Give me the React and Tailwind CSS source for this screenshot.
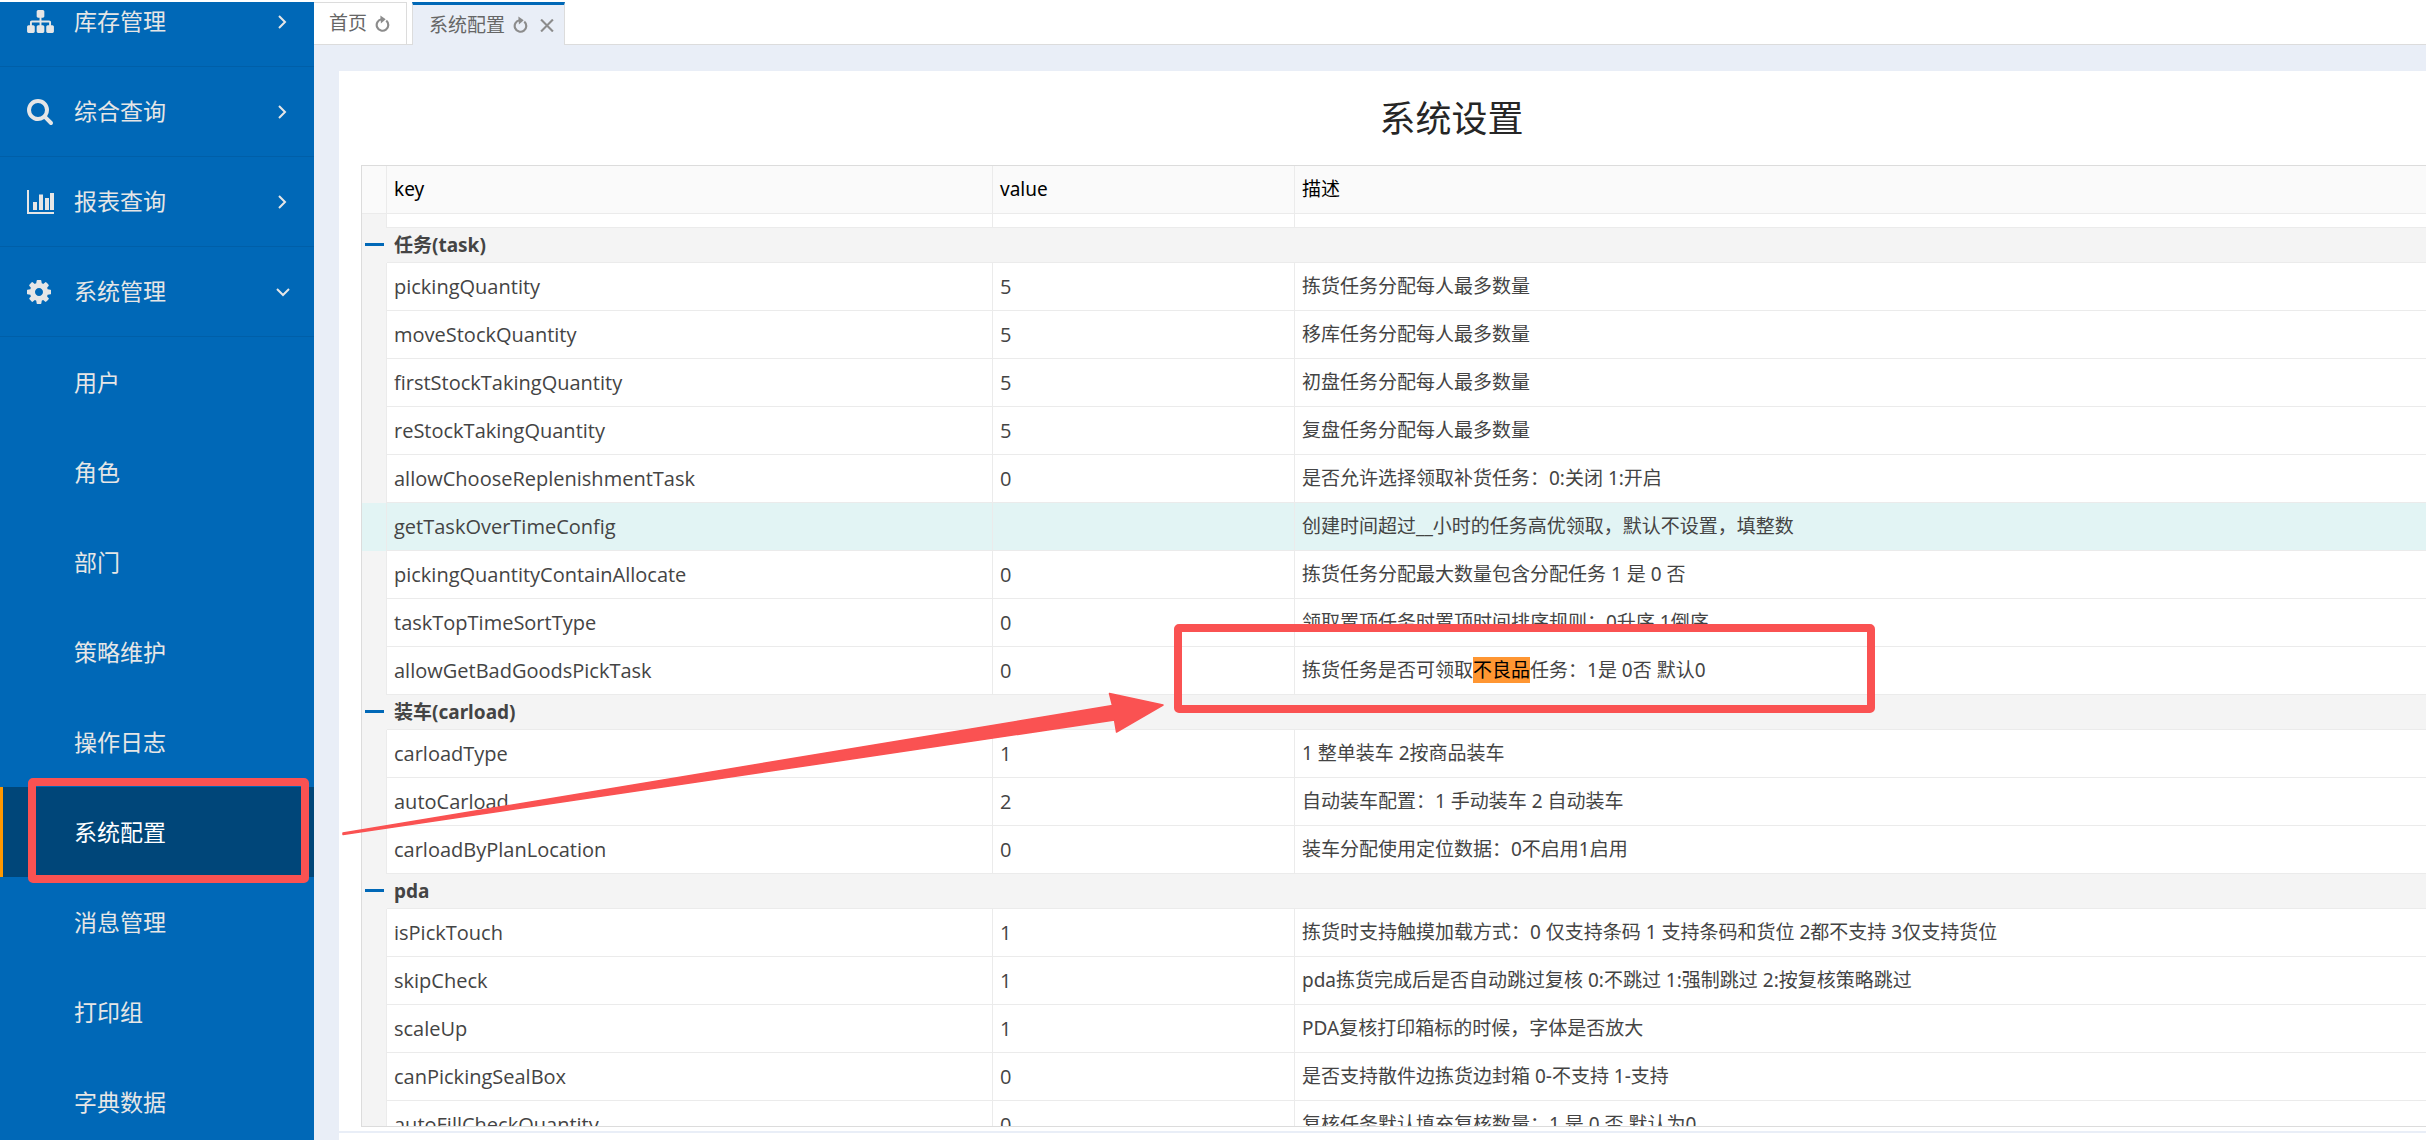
import React from "react";
import clsx from "clsx";

const SitemapIcon = () => (
  <svg width="27" height="23" viewBox="0 128 1792 1536" fill="currentColor">
    <path d="M1792 1248v320q0 40-28 68t-68 28h-320q-40 0-68-28t-28-68v-320q0-40 28-68t68-28h96v-192h-512v192h96q40 0 68 28t28 68v320q0 40-28 68t-68 28h-320q-40 0-68-28t-28-68v-320q0-40 28-68t68-28h96v-192h-512v192h96q40 0 68 28t28 68v320q0 40-28 68t-68 28h-320q-40 0-68-28t-28-68v-320q0-40 28-68t68-28h96v-192q0-52 38-90t90-38h512v-192h-96q-40 0-68-28t-28-68v-320q0-40 28-68t68-28h320q40 0 68 28t28 68v320q0 40-28 68t-68 28h-96v192h512q52 0 90 38t38 90v192h96q40 0 68 28t28 68z" />
  </svg>
);

const SearchIcon = () => (
  <svg width="26" height="26" viewBox="64 128 1664 1664" fill="currentColor">
    <path d="M1216 832q0-185-131.5-316.5t-316.5-131.5-316.5 131.5-131.5 316.5 131.5 316.5 316.5 131.5 316.5-131.5 131.5-316.5zm512 832q0 52-38 90t-90 38q-54 0-90-38l-343-342q-179 124-399 124-143 0-273.5-55.5t-225-150-150-225-55.5-273.5 55.5-273.5 150-225 225-150 273.5-55.5 273.5 55.5 225 150 150 225 55.5 273.5q0 220-124 399l343 343q37 37 37 90z" />
  </svg>
);

const ChartIcon = () => (
  <svg width="27" height="24" viewBox="0 0 27 24" fill="currentColor">
    <path d="M0 0h2v22h25v2H0zM6 12h4v8H6zM12 4.500h4V20h-4zM18 8h4v12h-4zM23 3h4v17h-4z" />
  </svg>
);

const CogIcon = () => (
  <svg width="24" height="24" viewBox="128 128 1536 1536" fill="currentColor">
    <path d="M1152 896q0-106-75-181t-181-75-181 75-75 181 75 181 181 75 181-75 75-181zm512-109v222q0 12-8 23t-20 13l-185 28q-19 54-39 91 35 50 107 138 10 12 10 25t-9 23q-27 37-99 108t-94 71q-12 0-26-9l-138-108q-44 23-91 38-16 136-29 186-7 28-36 28h-222q-14 0-24.500-8.500t-11.500-21.500l-28-184q-49-16-90-37l-141 107q-10 9-25 9-14 0-25-11-126-114-165-168-7-10-7-23 0-12 8-23 15-21 51-66.500t54-70.500q-27-50-41-99l-183-27q-13-2-21-12.500t-8-23.500v-222q0-12 8-23t19-13l186-28q14-46 39-92-40-57-107-138-10-12-10-24 0-10 9-23 26-36 98.500-107.500t94.500-71.500q13 0 26 10l138 107q44-23 91-38 16-136 29-186 7-28 36-28h222q14 0 24.500 8.500t11.500 21.500l28 184q49 16 90 37l142-107q9-9 24-9 13 0 25 10 129 119 165 170 7 8 7 22 0 12-8 23-15 21-51 66.500t-54 70.500q26 50 41 98l183 28q13 2 21 12.500t8 23.500z" />
  </svg>
);

const RefreshIcon = () => (
  <svg width="15" height="18" viewBox="0 0 14 16">
    <path
      d="M10.500 4.800A5.400 5.400 0 1 1 6 3.600"
      fill="none"
      stroke="currentColor"
      strokeWidth="2"
    />
    <path d="M5 0l5 3.600L5.500 7.500z" fill="currentColor" />
  </svg>
);

const CloseIcon = () => (
  <svg width="14" height="13" viewBox="0 0 13 12">
    <path d="M1 .5l11 11M12 .5l-11 11" stroke="currentColor" strokeWidth="2" />
  </svg>
);

const Chevron = ({ open }) => (
  <svg
    width="14"
    height="14"
    viewBox="0 0 14 14"
    fill="none"
    stroke="currentColor"
    strokeWidth="2"
  >
    <path d={open ? "M1 4l6 6 6-6" : "M3 1l6 6-6 6"} />
  </svg>
);

const menus = [
  { label: "库存管理", icon: SitemapIcon },
  { label: "综合查询", icon: SearchIcon },
  { label: "报表查询", icon: ChartIcon },
  { label: "系统管理", icon: CogIcon, open: true },
];

const subMenus = [
  "用户",
  "角色",
  "部门",
  "策略维护",
  "操作日志",
  "系统配置",
  "消息管理",
  "打印组",
  "字典数据",
];

const activeMenu = "系统配置";
const activeKey = "getTaskOverTimeConfig";

const groups = [
  {
    name: "任务(task)",
    rows: [
      ["pickingQuantity", "5", "拣货任务分配每人最多数量"],
      ["moveStockQuantity", "5", "移库任务分配每人最多数量"],
      ["firstStockTakingQuantity", "5", "初盘任务分配每人最多数量"],
      ["reStockTakingQuantity", "5", "复盘任务分配每人最多数量"],
      ["allowChooseReplenishmentTask", "0", "是否允许选择领取补货任务：0:关闭 1:开启"],
      ["getTaskOverTimeConfig", "", "创建时间超过__小时的任务高优领取，默认不设置，填整数"],
      ["pickingQuantityContainAllocate", "0", "拣货任务分配最大数量包含分配任务 1 是 0 否"],
      ["taskTopTimeSortType", "0", "领取置顶任务时置顶时间排序规则：0升序 1倒序"],
      [
        "allowGetBadGoodsPickTask",
        "0",
        <>
          拣货任务是否可领取
          <mark className="bg-[#ff9632] text-black">不良品</mark>
          任务：1是 0否 默认0
        </>,
      ],
    ],
  },
  {
    name: "装车(carload)",
    rows: [
      ["carloadType", "1", "1 整单装车 2按商品装车"],
      ["autoCarload", "2", "自动装车配置：1 手动装车 2 自动装车"],
      ["carloadByPlanLocation", "0", "装车分配使用定位数据：0不启用1启用"],
    ],
  },
  {
    name: "pda",
    rows: [
      ["isPickTouch", "1", "拣货时支持触摸加载方式：0 仅支持条码 1 支持条码和货位 2都不支持 3仅支持货位"],
      ["skipCheck", "1", "pda拣货完成后是否自动跳过复核 0:不跳过 1:强制跳过 2:按复核策略跳过"],
      ["scaleUp", "1", "PDA复核打印箱标的时候，字体是否放大"],
      ["canPickingSealBox", "0", "是否支持散件边拣货边封箱 0-不支持 1-支持"],
      ["autoFillCheckQuantity", "0", "复核任务默认填充复核数量：1 是 0 否 默认为0"],
    ],
  },
];

const Sidebar = () => (
  <aside className="mt-[2px] w-[314px] shrink-0 overflow-hidden bg-[#0068b7] text-[23px] text-[#e6e6e6]">
    {/* the list is scrolled down a little, the first entry is cut off */}
    <nav className="-mt-[25px]">
      {menus.map(({ label, icon: Icon, open }) => (
        <button
          key={label}
          type="button"
          aria-expanded={!!open}
          className="flex h-[90px] w-full items-center border-b border-[#005fa8] pr-6 pl-[27px] text-left"
        >
          <span className="w-[47px]">
            <Icon />
          </span>
          <span className="flex-1">{label}</span>
          <Chevron open={open} />
        </button>
      ))}
      <ul>
        {subMenus.map((label) => (
          <li key={label}>
            <a
              href="#"
              className={clsx(
                "flex h-[90px] items-center border-l-3 pl-[71px]",
                label === activeMenu
                  ? "border-[#ff9800] bg-[#004679] text-white"
                  : "border-transparent"
              )}
            >
              {label}
            </a>
          </li>
        ))}
      </ul>
    </nav>
  </aside>
);

const Tabs = () => (
  <div className="mt-[2px] flex h-[43px] gap-[5px] border-b border-[#dcdcdc] bg-white text-[19px] text-[#666]">
    <div className="flex items-center gap-2 border-t border-r border-[#dcdcdc] pr-4 pl-[15px]">
      <a href="#">首页</a>
      <button type="button" aria-label="刷新" className="text-[#8c8c8c]">
        <RefreshIcon />
      </button>
    </div>
    <div className="-mb-px flex items-center gap-2 border-x border-t-3 border-x-[#dcdcdc] border-t-[#0068b7] bg-[#e9eef7] pr-[10px] pl-4">
      <a href="#">系统配置</a>
      <button type="button" aria-label="刷新" className="text-[#8c8c8c]">
        <RefreshIcon />
      </button>
      <button type="button" aria-label="关闭" className="ml-1 text-[#8c8c8c]">
        <CloseIcon />
      </button>
    </div>
  </div>
);

const cell = "border-r border-b border-[#ebebeb] px-[7px]";
const gutter = "border-r border-[#ebebeb]";

const ConfigTable = () => (
  <table className="w-full table-fixed border-separate border-spacing-0 text-left whitespace-nowrap text-[#444]">
    <colgroup>
      <col className="w-[25px]" />
      <col className="w-[606px]" />
      <col className="w-[302px]" />
      <col />
    </colgroup>
    <thead className="bg-[#fafafa] text-[19px] text-black">
      <tr className="h-12">
        <th className="border-r border-b border-[#ebebeb]" />
        <th className={clsx(cell, "font-normal")}>key</th>
        <th className={clsx(cell, "font-normal")}>value</th>
        <th className={clsx(cell, "font-normal")}>描述</th>
      </tr>
    </thead>
    <tbody>
      <tr className="h-[14px]">
        <td className={clsx(gutter, "bg-[#f4f4f4]")} />
        <td className={cell} />
        <td className={cell} />
        <td className={cell} />
      </tr>
    </tbody>
    {groups.map((group) => (
      <tbody key={group.name}>
        <tr className="h-[35px] bg-[#f4f4f4] text-[19px]">
          <td className="px-[3px]">
            <button type="button" aria-label="收起" className="flex h-6 w-full">
              <span className="mt-[9px] h-[3px] w-full bg-[#0068b7]" />
            </button>
          </td>
          <th
            colSpan={3}
            className="border-b border-[#ebebeb] px-[7px] leading-6 font-bold"
          >
            {group.name}
          </th>
        </tr>
        {group.rows.map(([key, value, desc]) => (
          <tr
            key={key}
            className={clsx("h-12", key === activeKey && "bg-[#e2f4f4]")}
          >
            <td className={clsx(gutter, key !== activeKey && "bg-[#f4f4f4]")} />
            <td className={clsx(cell, "font-['Open_Sans',sans-serif] text-[20px]")}>
              {key}
            </td>
            <td className={clsx(cell, "font-['Open_Sans',sans-serif] text-[20px]")}>
              {value}
            </td>
            <td className={clsx(cell, "text-[19px]")}>{desc}</td>
          </tr>
        ))}
      </tbody>
    ))}
  </table>
);

const Annotations = () => (
  <svg
    className="pointer-events-none absolute top-0 left-0"
    width="1880"
    height="900"
    fill="none"
    stroke="#fa5252"
  >
    <rect x="32" y="782" width="273" height="97" rx="1" strokeWidth="8" strokeLinejoin="round" />
    <rect x="1178" y="628" width="693" height="81" rx="1" strokeWidth="8" strokeLinejoin="round" />
    <path
      d="M343 833L1112.500 705.500 1109.500 693.500 1163 705 1116.500 732 1114.500 720 343 834.500z"
      fill="#fa5252"
      strokeWidth="1.500"
      strokeLinejoin="round"
    />
  </svg>
);

export default function App() {
  return (
    <div className="relative flex h-screen overflow-hidden bg-white font-['Noto_Sans','Noto_Sans_CJK_SC',sans-serif]">
      <Sidebar />
      <div className="flex min-w-0 flex-1 flex-col">
        <Tabs />
        <main className="flex min-h-0 flex-1 flex-col overflow-hidden bg-[#e9eef7] pt-[26px] pl-[25px]">
          {/* the panel is wider than the window */}
          <section className="-mr-[138px] flex min-h-0 flex-1 flex-col bg-white px-[22px] pb-1">
            <h1 className="pt-[22px] pb-5 text-center text-[36px] leading-[52px] text-[#262626]">
              系统设置
            </h1>
            <div className="min-h-0 flex-1 overflow-hidden border border-[#dcdcdc]">
              <ConfigTable />
            </div>
          </section>
          <div className="mt-[2px] h-[7px] bg-white" />
        </main>
      </div>
      <Annotations />
    </div>
  );
}
